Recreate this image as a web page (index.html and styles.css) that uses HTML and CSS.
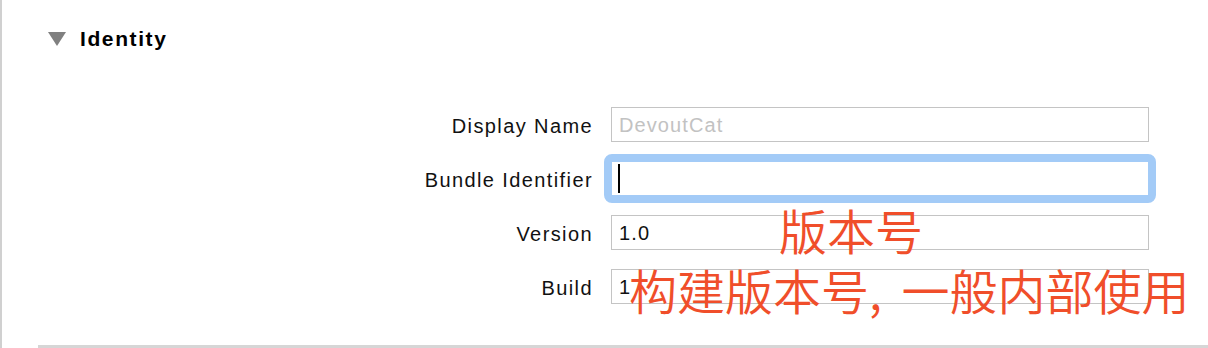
FILE: index.html
```html
<!DOCTYPE html>
<html lang="zh">
<head>
<meta charset="utf-8">
<title>Identity</title>
<link rel="stylesheet" href="styles.css">
</head>
<body>
<div class="panel">
  <div class="header">
    <span class="disclosure"></span>
    <span class="title">Identity</span>
  </div>
  <div class="form">
    <div class="label">Display Name</div>
    <div class="field"><span class="placeholder">DevoutCat</span></div>
    <div class="label">Bundle Identifier</div>
    <div class="field focused"><span class="caret"></span></div>
    <div class="label">Version</div>
    <div class="field">1.0</div>
    <div class="label">Build</div>
    <div class="field">1</div>
  </div>
  <div class="separator"></div>
  <div class="note note-version">版本号</div>
  <div class="note note-build">构建版本号, 一般内部使用</div>
</div>
</body>
</html>
```
FILE: styles.css
```css
html, body {
  margin: 0;
  padding: 0;
  background: #ffffff;
}

.panel {
  position: relative;
  box-sizing: border-box;
  height: 348px;
  border-left: 2px solid #d0d0d0;
  display: flex;
  flex-direction: column;
  font-family: "Liberation Sans", Arial, sans-serif;
  color: #111111;
}

.header {
  display: flex;
  align-items: center;
  gap: 14px;
  padding: 27px 0 0 46px;
  height: 24px;
}

.disclosure {
  width: 0;
  height: 0;
  border-left: 9px solid transparent;
  border-right: 9px solid transparent;
  border-top: 14px solid #808080;
}

.title {
  font-size: 21px;
  line-height: 24px;
  font-weight: bold;
  letter-spacing: 1.6px;
  color: #000000;
}

.form {
  margin-top: 56px;
  display: grid;
  grid-template-columns: 591px 538px;
  grid-auto-rows: 35px;
  column-gap: 18px;
  row-gap: 19px;
  font-size: 20px;
  letter-spacing: 1.1px;
}

.label {
  text-align: right;
  line-height: 35px;
  padding-top: 2px;
  box-sizing: border-box;
  letter-spacing: 1.4px;
}

.field {
  position: relative;
  box-sizing: border-box;
  border: 1px solid #c4c4c4;
  background: #ffffff;
  padding: 2px 7px 0 7px;
  line-height: 31px;
  color: #111111;
  display: flex;
  align-items: center;
}

.placeholder {
  color: #c2c2c2;
}

.field.focused {
  border-color: #a3cbf7;
}

.field.focused::after {
  content: "";
  position: absolute;
  inset: -8px;
  border: 7px solid #a3cbf7;
  border-radius: 8px;
  pointer-events: none;
}

.caret {
  display: block;
  width: 2px;
  height: 29px;
  margin-left: -1px;
  margin-top: -2px;
  background: #000000;
}

.separator {
  margin-top: auto;
  margin-left: 36px;
  height: 3px;
  background: #d6d6d6;
}

.note {
  position: absolute;
  font-family: "Noto Sans CJK SC", "Noto Sans", sans-serif;
  font-size: 48px;
  font-weight: 350;
  line-height: 48px;
  color: #f04e2a;
  white-space: nowrap;
}

.note-version {
  left: 777px;
  top: 205px;
}

.note-build {
  left: 627px;
  top: 265px;
  word-spacing: 9px;
}
```
